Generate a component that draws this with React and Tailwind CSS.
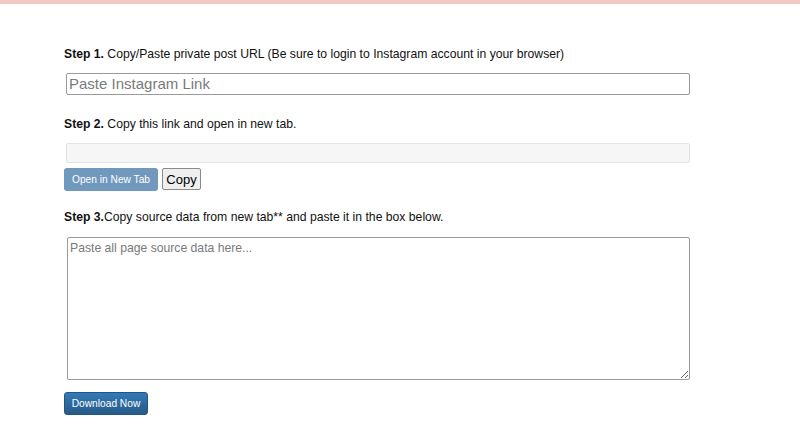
export default function App() {
  return (
    <div className="min-h-[437px] bg-white" style={{ fontFamily: '"Liberation Sans", Arial, sans-serif' }}>
      <div className="h-[4px] bg-[#f3c9c6]" />
      <div className="pl-[64px] pt-[41px] w-[690px] text-[12.2px] text-[#111]">
        <p className="leading-[18px]">
          <b>Step 1.</b> Copy/Paste private post URL (Be sure to login to Instagram account in your browser)
        </p>
        <input
          placeholder="Paste Instagram Link"
          className="mt-[10px] ml-[2px] block w-[624px] h-[22px] px-[2px] border border-[#9a9a9a] rounded-[2px] text-[15px] placeholder:text-[#7a7a7a] outline-none"
        />

        <p className="mt-[20px] leading-[18px]">
          <b>Step 2.</b> Copy this link and open in new tab.
        </p>
        <input
          disabled
          className="mt-[10px] ml-[2px] block w-[624px] h-[20px] border border-[#e3e3e3] bg-[#f6f6f6] rounded-[2px]"
        />
        <div className="mt-[5px] flex items-start gap-[4px]">
          <button className="h-[23px] w-[94px] pt-[2px] rounded-[3px] bg-[#7199bd] text-white text-[10.2px] leading-none">
            Open in New Tab
          </button>
          <button className="h-[22px] w-[39px] border border-[#8a8a8a] bg-[#efefef] rounded-[2px] text-[13px] leading-none text-black">
            Copy
          </button>
        </div>

        <p className="mt-[17px] leading-[18px]">
          <b>Step 3.</b>Copy source data from new tab** and paste it in the box below.
        </p>
        <textarea
          placeholder="Paste all page source data here..."
          className="mt-[11px] ml-[3px] block w-[623px] h-[143px] px-[2px] py-[1px] border border-[#9a9a9a] rounded-[2px] text-[12.2px] placeholder:text-[#7a7a7a] outline-none resize"
        />
        <button className="mt-[12px] h-[23px] w-[84px] pt-[2px] rounded-[3px] border border-[#245580] bg-gradient-to-b from-[#337ab7] to-[#265a88] text-white text-[10.2px] leading-none">
          Download Now
        </button>
      </div>
    </div>
  );
}
